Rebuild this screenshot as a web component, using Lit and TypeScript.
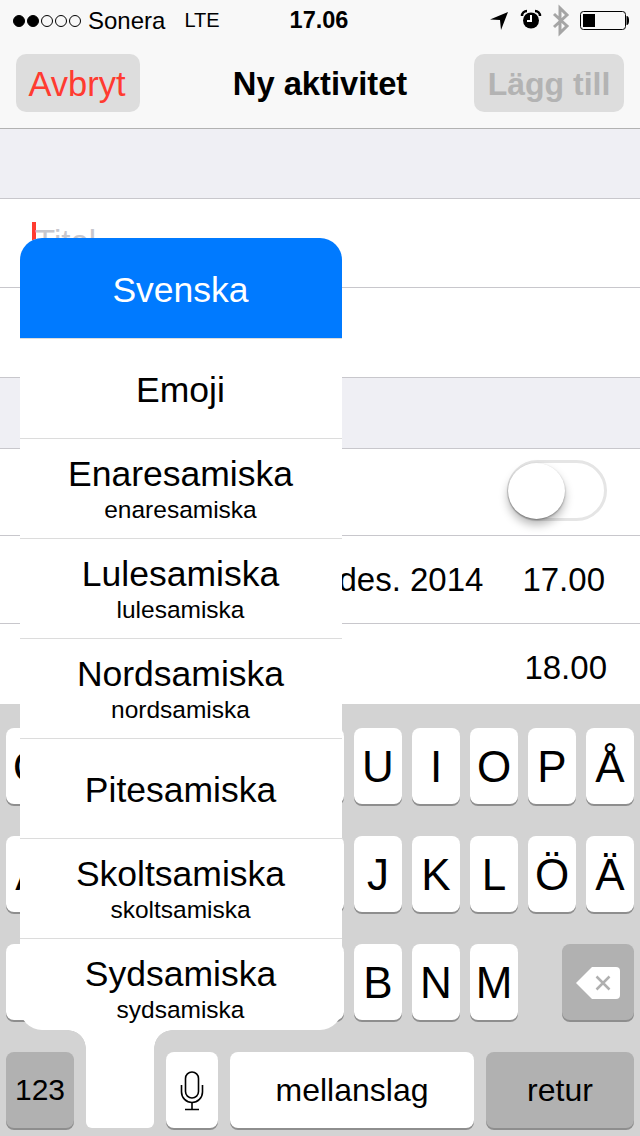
import { LitElement, html, css, svg } from 'lit';
import { customElement } from 'lit/decorators.js';

const languages = [
  { name: 'Svenska', active: true },
  { name: 'Emoji' },
  { name: 'Enaresamiska', sub: 'enaresamiska' },
  { name: 'Lulesamiska', sub: 'lulesamiska' },
  { name: 'Nordsamiska', sub: 'nordsamiska' },
  { name: 'Pitesamiska' },
  { name: 'Skoltsamiska', sub: 'skoltsamiska' },
  { name: 'Sydsamiska', sub: 'sydsamiska' },
];

const micIcon = svg`<svg width="24" height="40" viewBox="0 0 24 40" fill="none" stroke="#000" stroke-width="1.6">
  <rect x="5.5" y="1" width="13" height="26" rx="6.5"/>
  <path d="M1.5 14v7a10.5 10.5 0 0 0 21 0v-7"/>
  <path d="M12 31.5v7M5 38.5h14"/>
</svg>`;

const backspaceIcon = svg`<svg width="44" height="32" viewBox="0 0 44 32">
  <path fill="#fff" d="M16 0h24a4 4 0 0 1 4 4v24a4 4 0 0 1-4 4H16L0 16z"/>
  <path stroke="#b0b0b0" stroke-width="2.5" d="M20.5 9.5l13 13M33.5 9.5l-13 13"/>
</svg>`;

@customElement('app-root')
export class AppRoot extends LitElement {
  static styles = css`
    :host {
      display: block;
      position: relative;
      width: 640px;
      height: 1136px;
      overflow: hidden;
      background: #efeff4;
      font-family: 'Liberation Sans', Arial, sans-serif;
      color: #000;
    }
    .header {
      height: 128px;
      background: #f8f8f8;
      border-bottom: 1px solid #b2b2b2;
    }
    .status {
      height: 40px;
      display: grid;
      grid-template-columns: 1fr auto 1fr;
      align-items: center;
      padding: 0 11px 0 13px;
      box-sizing: border-box;
      font-size: 24px;
    }
    .status-left {
      display: flex;
      align-items: center;
      padding-top: 1px;
    }
    .dots {
      display: flex;
      gap: 2px;
      margin-right: 7px;
    }
    .dot {
      width: 12px;
      height: 12px;
      border-radius: 50%;
      box-sizing: border-box;
      border: 1px solid #000;
    }
    .dot.on {
      background: #000;
    }
    .lte {
      font-size: 20px;
      margin-left: 19px;
    }
    .time {
      font-size: 23.5px;
      font-weight: bold;
      padding: 1px 4px 0 0;
    }
    .status-right {
      display: block;
      justify-self: end;
    }
    .nav {
      height: 88px;
      display: grid;
      grid-template-columns: 1fr auto 1fr;
      align-items: start;
      padding: 14px 16px 0;
      box-sizing: border-box;
    }
    .nav-btn {
      height: 58px;
      line-height: 60px;
      background: #ddd;
      border-radius: 10px;
      text-align: center;
      box-sizing: border-box;
    }
    .cancel {
      width: 124px;
      padding-right: 2px;
      color: #ff3b30;
      font-size: 34.5px;
      justify-self: start;
    }
    .add {
      width: 150px;
      color: #b3b3b3;
      font-size: 32px;
      font-weight: bold;
      justify-self: end;
    }
    .title {
      font-size: 32.7px;
      font-weight: bold;
      line-height: 60px;
    }
    .gap {
      height: 69px;
    }
    .gap.wide {
      height: 70px;
    }
    .group {
      background: #fff;
      border-top: 1px solid #c8c7cc;
      border-bottom: 1px solid #c8c7cc;
    }
    .row {
      display: flex;
      align-items: center;
      justify-content: flex-end;
      height: 88px;
      box-sizing: border-box;
      font-size: 33px;
    }
    .row + .row {
      border-top: 1px solid #c8c7cc;
    }
    .row.tall {
      height: 90px;
    }
    .field {
      justify-content: flex-start;
      align-items: flex-start;
      padding-left: 32px;
    }
    .cursor {
      width: 4px;
      height: 40px;
      margin-top: 23px;
      background: #ff3b30;
    }
    .placeholder {
      margin: 24px 0 0 -1px;
      font-size: 33px;
      color: #c7c7cd;
    }
    .toggle-row {
      height: 86px;
      padding: 0 33px 3px 0;
    }
    .switch {
      position: relative;
      width: 100px;
      height: 61px;
      box-sizing: border-box;
      border: 3px solid #e5e5e5;
      border-radius: 31px;
    }
    .knob {
      position: absolute;
      left: -2px;
      top: 0;
      width: 57px;
      height: 56px;
      border-radius: 50%;
      background: #fff;
      box-shadow: 0 6px 10px rgba(0, 0, 0, 0.28), 0 1px 2px rgba(0, 0, 0, 0.35);
    }
    .date {
      margin-right: 39px;
    }
    .start {
      padding-right: 35px;
    }
    .end {
      padding-right: 33px;
    }
    .group.last {
      border-bottom: none;
    }
    .keyboard {
      position: absolute;
      left: 0;
      right: 0;
      top: 704px;
      height: 432px;
      box-sizing: border-box;
      padding: 24px 6px 0;
      display: flex;
      flex-direction: column;
      gap: 32px;
      background: #d3d3d3;
    }
    .keys {
      display: flex;
      gap: 10px;
    }
    .key {
      flex: none;
      width: 48px;
      height: 76px;
      padding-top: 2px;
      box-sizing: border-box;
      display: flex;
      align-items: center;
      justify-content: center;
      background: #fff;
      border-radius: 8px;
      box-shadow: 0 2px 0 #8e8e8e;
      font-size: 44px;
    }
    .key.word {
      font-size: 32px;
      padding-top: 0;
    }
    .key.dark {
      background: #b1b1b1;
    }
    .shift {
      width: 72px;
      margin-right: 34px;
    }
    .back {
      width: 72px;
      margin-left: 34px;
    }
    .num {
      width: 68px;
      font-size: 30px;
      padding-top: 0;
    }
    .globe {
      width: 68px;
      margin-left: 2px;
      background: none;
      box-shadow: none;
    }
    .mic {
      width: 52px;
      margin-left: 2px;
    }
    .space {
      width: 244px;
      margin-left: 2px;
    }
    .ret {
      width: 148px;
      margin-left: 2px;
    }
    .popup {
      position: absolute;
      left: 20px;
      top: 238px;
      width: 322px;
      height: 792px;
      background: #fff;
      border-radius: 22px;
    }
    .lang {
      height: 100px;
      box-sizing: border-box;
      border-top: 1px solid #dcdcdc;
      padding: 32px 1px 0 0;
      text-align: center;
      font-size: 35.5px;
      line-height: 38px;
    }
    .lang.two {
      padding-top: 16px;
    }
    .lang small {
      display: block;
      font-size: 24.5px;
      line-height: 28px;
      margin-top: 3px;
    }
    .lang.active {
      background: #007aff;
      color: #fff;
      border-top: none;
      border-radius: 22px 22px 0 0;
      padding-top: 33px;
    }
    .lang:last-of-type {
      height: 92px;
    }
    .tab {
      position: absolute;
      left: 66px;
      top: 100%;
      width: 68px;
      height: 98px;
      background: #fff;
      border-radius: 0 0 6px 6px;
    }
    .tab::before,
    .tab::after {
      content: '';
      position: absolute;
      top: 0;
      width: 18px;
      height: 18px;
    }
    .tab::before {
      right: 100%;
      background: radial-gradient(circle at 0 100%, transparent 17.5px, #fff 18px);
    }
    .tab::after {
      left: 100%;
      background: radial-gradient(circle at 100% 100%, transparent 17.5px, #fff 18px);
    }
  `;

  renderStatus() {
    return html`
      <div class="status">
        <div class="status-left">
          <div class="dots">
            ${[1, 2, 3, 4, 5].map((n) => html`<span class="dot ${n < 3 ? 'on' : ''}"></span>`)}
          </div>
          <span>Sonera</span>
          <span class="lte">LTE</span>
        </div>
        <span class="time">17.06</span>
        <svg class="status-right" width="140" height="40" viewBox="489 0 140 40">
          <path d="M508 12L490 19.5l10 .5 1 10z"/>
          <circle cx="531" cy="20.5" r="8" fill="#000"/>
          <path d="M522 16a5 5 0 0 1 5-5M540 16a5 5 0 0 0-5-5" fill="none" stroke="#000" stroke-width="2.5"/>
          <path d="M531 15v6h-4" fill="none" stroke="#fff" stroke-width="2"/>
          <path d="M554 14l13 12-7 7V8l7 7-13 12" fill="none" stroke="#a5a5a5" stroke-width="3"/>
          <rect x="580.5" y="11.5" width="45" height="18" rx="3" fill="none" stroke="#000" stroke-width="1"/>
          <rect x="583" y="14" width="12" height="13" fill="#000"/>
          <path d="M626.5 16c2 0 2.5 2 2.5 4.5s-.5 4.5-2.5 4.5z"/>
        </svg>
      </div>
    `;
  }

  // keys under the language popup stay blank, only their edges show
  renderKeys(letters: string) {
    return letters.split('').map((l) => html`<div class="key">${l === '_' ? '' : l}</div>`);
  }

  render() {
    return html`
      <div class="header">
        ${this.renderStatus()}
        <div class="nav">
          <div class="nav-btn cancel">Avbryt</div>
          <div class="title">Ny aktivitet</div>
          <div class="nav-btn add">Lägg till</div>
        </div>
      </div>

      <div class="gap"></div>
      <div class="group">
        <div class="row field">
          <span class="cursor"></span>
          <span class="placeholder">Titel</span>
        </div>
        <div class="row tall"></div>
      </div>

      <div class="gap wide"></div>
      <div class="group last">
        <div class="row toggle-row">
          <div class="switch"><div class="knob"></div></div>
        </div>
        <div class="row start">
          <span class="date">16 des. 2014</span>
          <span>17.00</span>
        </div>
        <div class="row end"><span>18.00</span></div>
      </div>

      <div class="keyboard">
        <div class="keys">${this.renderKeys('Q_____UIOPÅ')}</div>
        <div class="keys">${this.renderKeys('A_____JKLÖÄ')}</div>
        <div class="keys">
          <div class="key shift"></div>
          ${this.renderKeys('____BNM')}
          <div class="key dark back">${backspaceIcon}</div>
        </div>
        <div class="keys">
          <div class="key dark num">123</div>
          <div class="key globe"></div>
          <div class="key mic">${micIcon}</div>
          <div class="key word space">mellanslag</div>
          <div class="key word dark ret">retur</div>
        </div>
      </div>

      <div class="popup">
        ${languages.map(
          (l) => html`
            <div class="lang ${l.active ? 'active' : ''} ${l.sub ? 'two' : ''}">
              ${l.name}${l.sub ? html`<small>${l.sub}</small>` : ''}
            </div>
          `
        )}
        <div class="tab"></div>
      </div>
    `;
  }
}
